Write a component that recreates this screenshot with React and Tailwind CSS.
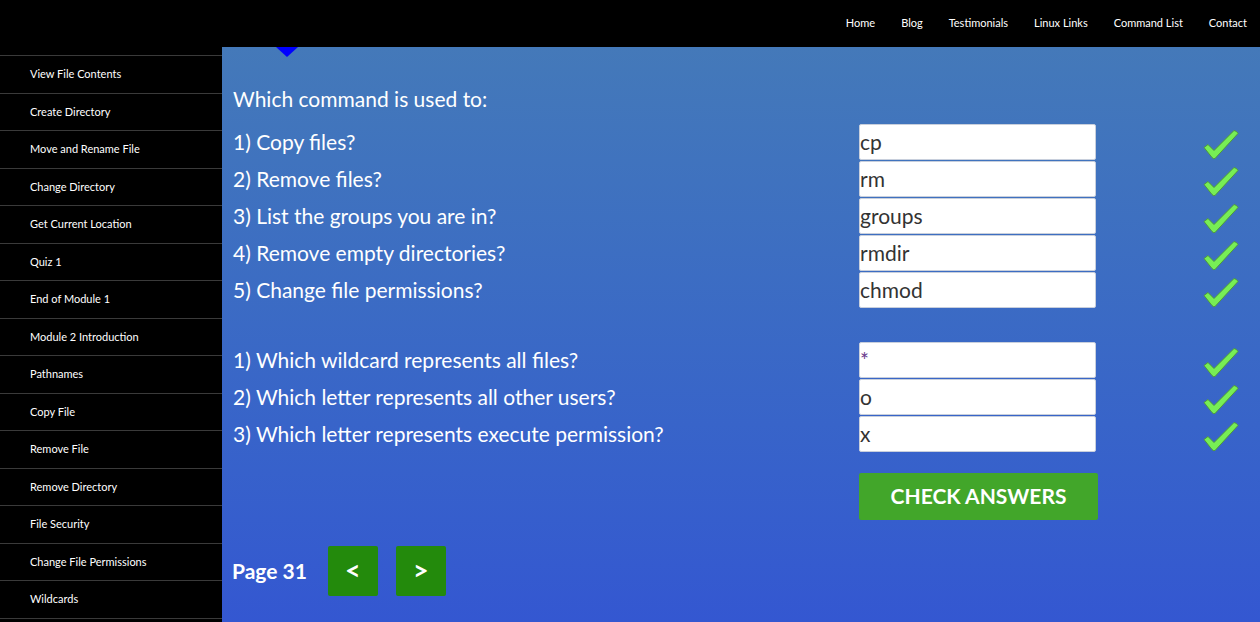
import React from "react";

const nav = ["Home", "Blog", "Testimonials", "Linux Links", "Command List", "Contact"];
const side = [
  "View File Contents",
  "Create Directory",
  "Move and Rename File",
  "Change Directory",
  "Get Current Location",
  "Quiz 1",
  "End of Module 1",
  "Module 2 Introduction",
  "Pathnames",
  "Copy File",
  "Remove File",
  "Remove Directory",
  "File Security",
  "Change File Permissions",
  "Wildcards",
];

const group1 = [
  ["1) Copy files?", "cp"],
  ["2) Remove files?", "rm"],
  ["3) List the groups you are in?", "groups"],
  ["4) Remove empty directories?", "rmdir"],
  ["5) Change file permissions?", "chmod"],
];
const group2 = [
  ["1) Which wildcard represents all files?", "*"],
  ["2) Which letter represents all other users?", "o"],
  ["3) Which letter represents execute permission?", "x"],
];

function Check() {
  return (
    <svg width="36" height="31" viewBox="0 0 36 31">
      <path
        d="M1 18.5 L5 15.5 L11 21.5 L31 1.5 Q34 2 35 4.5 L12 29.5 Q10 30 9 28.5 Z"
        fill="#77ee55"
        stroke="#4f9a3a"
        strokeWidth="1"
        strokeLinejoin="round"
      />
    </svg>
  );
}

function Row({ q, a }) {
  return (
    <div className="flex h-[37px] items-center">
      <div className="w-[626px] pb-[2px] text-[21px] text-white leading-[28px]">{q}</div>
      <div className="h-[37px] w-[237px] pb-px">
        <div className="flex h-[36px] w-full items-center rounded-[2px] border border-[#c8cfdc] bg-white pb-[1px] text-[21px] text-[#333333]">
          {a === "*" ? <span className="text-[#6a3a8c]">*</span> : a}
        </div>
      </div>
      <div className="ml-auto mr-[21px] flex h-[37px] items-center pt-[3px]">
        <Check />
      </div>
    </div>
  );
}

export default function App() {
  return (
    <div className="h-[622px] w-[1260px] overflow-hidden bg-black" style={{ fontFamily: "Lato, 'Open Sans', sans-serif" }}>
      <header className="flex h-[47px] items-center justify-end gap-[26px] bg-black pr-[13px] pb-[1px]">
        {nav.map((n) => (
          <span key={n} className="text-[11px] text-white">{n}</span>
        ))}
      </header>
      <div className="flex h-[575px]">
        <aside className="w-[222px] shrink-0 bg-black pt-[8px]">
          {side.map((s) => (
            <div key={s} className="flex h-[37.5px] items-center border-t border-[#3a3a3a] pl-[30px] text-[11px] text-white">
              {s}
            </div>
          ))}
          <div className="border-t border-[#3a3a3a]" />
        </aside>
        <main className="relative flex-1 bg-gradient-to-b from-[#4479b9] to-[#3457d1] pl-[11px] pt-[38px]">
          <div className="absolute left-[54px] top-0 h-0 w-0 border-l-[11px] border-r-[11px] border-t-[10px] border-l-transparent border-r-transparent border-t-[#0000ff]" />
          <div className="mb-[11px] h-[28px] text-[21px] leading-[28px] text-white">Which command is used to:</div>
          {group1.map(([q, a]) => (
            <Row key={q} q={q} a={a} />
          ))}
          <div className="h-[33px]" />
          {group2.map(([q, a]) => (
            <Row key={q} q={q} a={a} />
          ))}
          <div className="ml-[626px] mt-[20px] flex h-[47px] w-[239px] items-center justify-center rounded-[2px] bg-[#42a62a] pb-[2px] text-[21px] font-bold text-white">
            CHECK ANSWERS
          </div>
          <div className="mt-[26px] flex items-center">
            <span className="ml-[-1px] mr-[21px] text-[21px] font-bold text-white">Page 31</span>
            <div className="flex h-[50px] w-[50px] items-center justify-center rounded-[2px] bg-[#238a0c] pb-[2px] text-[27px] font-bold text-white">&lt;</div>
            <div className="ml-[18px] flex h-[50px] w-[50px] items-center justify-center rounded-[2px] bg-[#238a0c] pb-[2px] text-[27px] font-bold text-white">&gt;</div>
          </div>
        </main>
      </div>
    </div>
  );
}
